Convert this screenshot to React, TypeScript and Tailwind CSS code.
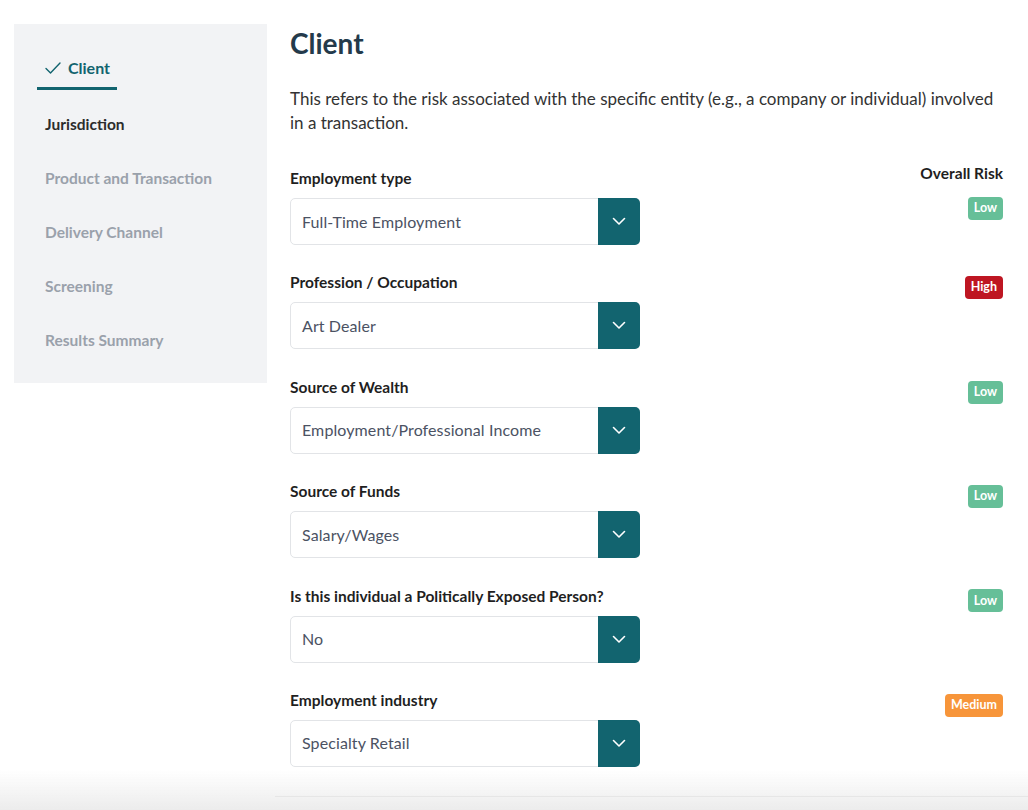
import React from "react";

type Risk = "Low" | "High" | "Medium";

const riskClass: Record<Risk, string> = {
  Low: "bg-[#66bf98]",
  High: "bg-[#be1622]",
  Medium: "bg-[#f7953a]",
};

const rows: { label: string; value: string; risk: Risk }[] = [
  { label: "Employment type", value: "Full-Time Employment", risk: "Low" },
  { label: "Profession / Occupation", value: "Art Dealer", risk: "High" },
  { label: "Source of Wealth", value: "Employment/Professional Income", risk: "Low" },
  { label: "Source of Funds", value: "Salary/Wages", risk: "Low" },
  { label: "Is this individual a Politically Exposed Person?", value: "No", risk: "Low" },
  { label: "Employment industry", value: "Specialty Retail", risk: "Medium" },
];

function Badge({ risk }: { risk: Risk }) {
  return (
    <span
      className={`inline-flex h-[23px] items-center rounded-[4px] px-[6px] text-[12.5px] font-bold text-white ${riskClass[risk]}`}
    >
      {risk}
    </span>
  );
}

function Select({ value }: { value: string }) {
  return (
    <div className="flex h-[47px] w-[350px] rounded-[5px] border border-[#e2e4e7] bg-white">
      <div className="flex flex-1 items-center pl-[11px] text-[16px] tracking-[0.1px] text-[#4b5263]">
        {value}
      </div>
      <div className="-my-px -mr-px flex w-[42px] items-center justify-center rounded-r-[5px] bg-[#12646f]">
        <svg width="14" height="9" viewBox="0 0 14 9" fill="none">
          <path d="M1.5 1.5 L7 7 L12.5 1.5" stroke="white" strokeWidth="1.6" strokeLinecap="round" strokeLinejoin="round" />
        </svg>
      </div>
    </div>
  );
}

export default function App() {
  const nav = ["Jurisdiction", "Product and Transaction", "Delivery Channel", "Screening", "Results Summary"];
  return (
    <div className="relative min-h-[810px] bg-white" style={{ fontFamily: "Lato, 'Liberation Sans', sans-serif" }}>
      <div className="flex gap-[23px] pl-[14px] pr-[25px] pt-[24px]">
        <aside className="h-[359px] w-[253px] shrink-0 bg-[#f2f3f5] pl-[23px] pt-[32px]">
          <div className="inline-flex flex-col">
            <div className="flex items-center gap-[7px] pl-[8px] pr-[9px] text-[16px] font-bold text-[#12646f]">
              <svg width="16" height="12" viewBox="0 0 16 12" fill="none">
                <path d="M1 6.5 L5.5 11 L15 1" stroke="#12646f" strokeWidth="1.4" strokeLinecap="round" strokeLinejoin="round" />
              </svg>
              <span className="leading-[22px]">Client</span>
            </div>
            <div className="mt-[8px] h-[3px] w-[80px] bg-[#12646f]" />
          </div>
          <div className="mt-[8px] flex flex-col pl-[8px]">
            {nav.map((n, i) => (
              <div
                key={n}
                className={`flex h-[54px] items-center text-[15.5px] font-bold ${i === 0 ? "text-[#2c2c2c]" : "text-[#9aa1ab]"}`}
              >
                {n}
              </div>
            ))}
          </div>
        </aside>
        <main className="flex-1 pb-[40px]">
          <h1 className="mt-[2px] text-[28px] font-bold leading-[34px] text-[#243a4b]">Client</h1>
          <p className="mt-[27px] text-[17px] leading-[24px] text-[#333333]">
            This refers to the risk associated with the specific entity (e.g., a company or individual) involved in a
            transaction.
          </p>
          <div className="mt-[32px] flex flex-col gap-[26.4px]">
            {rows.map((r, i) => (
              <div key={r.label} className="flex items-start justify-between">
                <div className="flex flex-col gap-[9px]">
                  <div className="text-[15.5px] font-bold leading-[22px] text-[#1f1f1f]">{r.label}</div>
                  <Select value={r.value} />
                </div>
                <div className="flex flex-col items-end">
                  {i === 0 && (
                    <div className="-mt-[5px] mb-[10px] text-[15.5px] font-bold leading-[22px] text-[#1f1f1f]">Overall Risk</div>
                  )}
                  <div className={i === 0 ? "" : "mt-[2px]"}>
                    <Badge risk={r.risk} />
                  </div>
                </div>
              </div>
            ))}
          </div>
        </main>
      </div>
      <div className="pointer-events-none fixed bottom-0 left-0 right-0 h-[40px] bg-gradient-to-b from-white/0 to-[#ececec]">
        <div className="absolute left-[275px] right-0 top-[26px] h-px bg-[#e6e6e6]" />
      </div>
    </div>
  );
}
